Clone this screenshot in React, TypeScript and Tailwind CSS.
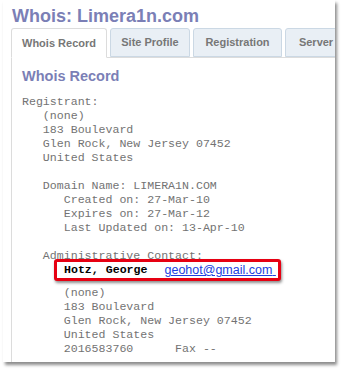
const mono = { fontFamily: '"Liberation Mono", "Courier New", monospace' };

const beforeLines = [
  "Registrant:",
  "   (none)",
  "   183 Boulevard",
  "   Glen Rock, New Jersey 07452",
  "   United States",
  "",
  "   Domain Name: LIMERA1N.COM",
  "      Created on: 27-Mar-10",
  "      Expires on: 27-Mar-12",
  "      Last Updated on: 13-Apr-10",
  "",
  "   Administrative Contact:",
];

const afterLines = [
  "      (none)",
  "      183 Boulevard",
  "      Glen Rock, New Jersey 07452",
  "      United States",
  "      2016583760      Fax --",
];

const tabs = [
  { label: "Whois Record", width: "w-[96px]", active: true },
  { label: "Site Profile", width: "w-[80px]", active: false },
  { label: "Registration", width: "w-[89px]", active: false },
  { label: "Server Stats", width: "w-[92px]", active: false },
];

function Line({ text }: { text: string }) {
  return (
    <div className="h-[14px] leading-[14px] whitespace-pre text-[11.6px] text-[#737373]" style={mono}>
      {text}
    </div>
  );
}

export default function App() {
  return (
    <div className="w-[343px] h-[371px] bg-white font-['Liberation_Sans',Arial,sans-serif]">
      <div className="ml-[3px] w-[332px] h-[362px] bg-white flex flex-col overflow-hidden shadow-[2px_3px_3px_rgba(0,0,0,0.45)]">
        {/* title */}
        <h1 className="pl-[9px] pt-[5px] h-[28px] leading-[22px] text-[18px] font-bold text-[#7b7fb6] whitespace-nowrap">
          Whois: Limera1n.com
        </h1>

        {/* tabs */}
        <div className="flex items-end gap-[3px] pl-[8px] h-[29px] whitespace-nowrap">
          {tabs.map((t) => (
            <div
              key={t.label}
              className={`${t.width} shrink-0 h-[29px] flex items-center justify-center rounded-t-[3px] border text-[11px] font-bold text-[#777] ${
                t.active
                  ? "bg-white border-[#dcdcdc] border-b-white relative z-10 -mb-px h-[30px]"
                  : "bg-[#e9eff5] border-[#cbd8e4]"
              }`}
            >
              {t.label}
            </div>
          ))}
        </div>

        {/* panel */}
        <div className="ml-[8px] flex-1 border-l border-t border-[#dcdcdc] pl-[10px] pt-[10px] w-[400px]">
          <h2 className="h-[17px] leading-[17px] text-[14.5px] font-bold text-[#7b7fb6]">Whois Record</h2>
          <div className="mt-[10px]">
            {beforeLines.map((l, i) => (
              <Line key={`b${i}`} text={l} />
            ))}
            <div className="h-[27px]">
              <div className="-mt-[4px] ml-[32px] w-[227px] h-[22px] border-[3px] border-[#e60012] rounded-[3px] bg-white flex items-center pl-[7px] relative z-10 shadow-[1px_2px_3px_rgba(0,0,0,0.45)]">
                <span className="h-[14px] leading-[14px] whitespace-pre text-[11.6px] font-bold text-black" style={mono}>
                  Hotz, George
                </span>
                <a
                  href="#"
                  className="ml-[17px] text-[12.5px] leading-[14px] text-[#2040e0] underline whitespace-pre"
                >
                  geohot@gmail.com{"\u00a0"}
                </a>
              </div>
            </div>
            {afterLines.map((l, i) => (
              <Line key={`a${i}`} text={l} />
            ))}
          </div>
        </div>
      </div>
    </div>
  );
}
